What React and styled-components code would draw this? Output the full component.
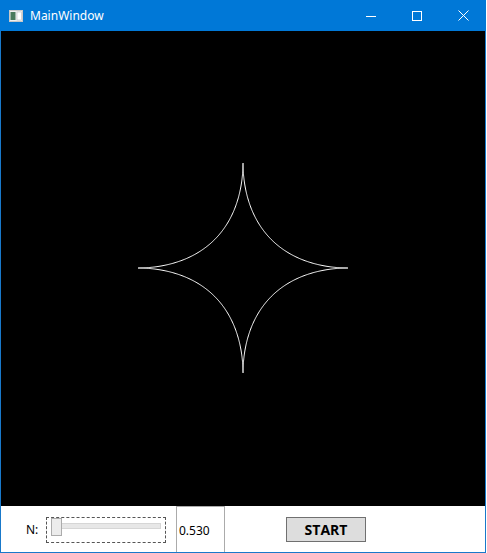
import React from 'react'
import styled, {createGlobalStyle} from 'styled-components'

const Global = createGlobalStyle`
    html, body {
        margin: 0;
        padding: 0;
        background: #ffffff;
        font-family: "Noto Sans", "Open Sans", sans-serif;
    }
`

const N = 0.53
const R = 105

const superPath = (n, r, cx, cy) => {
    const p = 2 / n
    const pts = []
    for (let i = 0; i <= 720; i++) {
        const t = (i / 720) * Math.PI * 2
        const c = Math.cos(t)
        const s = Math.sin(t)
        const x = cx + r * Math.sign(c) * Math.pow(Math.abs(c), p)
        const y = cy - r * Math.sign(s) * Math.pow(Math.abs(s), p)
        pts.push(`${x.toFixed(2)},${y.toFixed(2)}`)
    }
    return 'M' + pts.join(' L') + ' Z'
}

const Window = styled.div`
    width: 484px;
    height: 552px;
    border: 1px solid #1979ca;
    border-top: none;
    display: flex;
    flex-direction: column;
    background: #ffffff;
`

const TitleBar = styled.div`
    height: 31px;
    background: #0078d7;
    display: flex;
    align-items: center;
    color: #ffffff;
    margin: 0 -1px;
`

const AppIcon = styled.svg`
    margin-left: 9px;
    margin-right: 7px;
`

const Title = styled.span`
    font-size: 12px;
    flex: 1;
    padding-bottom: 1px;
`

const CtlButton = styled.div`
    width: 46px;
    height: 31px;
    display: flex;
    align-items: center;
    justify-content: center;
`

const Canvas = styled.div`
    height: 475px;
    background: #000000;
`

const Panel = styled.div`
    height: 46px;
    display: flex;
    align-items: center;
    font-size: 12px;
    color: #000000;
`

const Label = styled.span`
    margin-left: 25px;
    width: 20px;
    flex-shrink: 0;
`

const SliderBox = styled.div`
    width: 118px;
    height: 24px;
    border: 1px dashed #555555;
    position: relative;
    margin-top: 1px;
    flex-shrink: 0;
`

const Track = styled.div`
    position: absolute;
    left: 6px;
    right: 4px;
    top: 5px;
    height: 4px;
    background: #e7e7e7;
    border: 1px solid #d6d6d6;
`

const Thumb = styled.div`
    position: absolute;
    left: 4px;
    top: 0;
    width: 9px;
    height: 16px;
    background: #ececec;
    border: 1px solid #acacac;
`

const TextBox = styled.div`
    margin-left: 10px;
    width: 49px;
    height: 46px;
    flex-shrink: 0;
    border: 1px solid #ababab;
    border-bottom: none;
    box-sizing: border-box;
    display: flex;
    align-items: center;
    padding-left: 2px;
    padding-top: 2px;
`

const StartButton = styled.div`
    margin-left: 61px;
    width: 78px;
    height: 23px;
    flex-shrink: 0;
    background: #dddddd;
    border: 1px solid #707070;
    display: flex;
    align-items: center;
    justify-content: center;
    font-weight: bold;
    font-size: 14px;
    font-family: "Open Sans", "Noto Sans", sans-serif;
    margin-top: 1px;
`

export default function App() {
    const d = superPath(N, R, 242, 237)
    return (
        <>
            <Global />
            <Window>
                <TitleBar>
                    <AppIcon width="14" height="12" viewBox="0 0 14 12">
                        <rect x="0.5" y="0.5" width="13" height="11" fill="#f0f0f0" stroke="#c8c8c8" />
                        <rect x="1.5" y="2" width="5" height="8" fill="#4a7a5c" />
                        <rect x="8" y="2" width="4.5" height="8" fill="#ffffff" stroke="#bbbbbb" strokeWidth="0.6" />
                    </AppIcon>
                    <Title>MainWindow</Title>
                    <CtlButton>
                        <svg width="10" height="10" viewBox="0 0 10 10">
                            <line x1="0" y1="5.5" x2="10" y2="5.5" stroke="#ffffff" strokeWidth="1" />
                        </svg>
                    </CtlButton>
                    <CtlButton>
                        <svg width="10" height="10" viewBox="0 0 10 10">
                            <rect x="0.5" y="0.5" width="9" height="9" fill="none" stroke="#ffffff" strokeWidth="1" />
                        </svg>
                    </CtlButton>
                    <CtlButton>
                        <svg width="11" height="11" viewBox="0 0 11 11">
                            <path d="M0.5 0.5 L10.5 10.5 M10.5 0.5 L0.5 10.5" stroke="#ffffff" strokeWidth="1" />
                        </svg>
                    </CtlButton>
                </TitleBar>
                <Canvas>
                    <svg width="484" height="475" viewBox="0 0 484 475">
                        <path d={d} fill="none" stroke="#ffffff" strokeWidth="1" />
                    </svg>
                </Canvas>
                <Panel>
                    <Label>N:</Label>
                    <SliderBox>
                        <Track />
                        <Thumb />
                    </SliderBox>
                    <TextBox>0.530</TextBox>
                    <StartButton>START</StartButton>
                </Panel>
            </Window>
        </>
    )
}
